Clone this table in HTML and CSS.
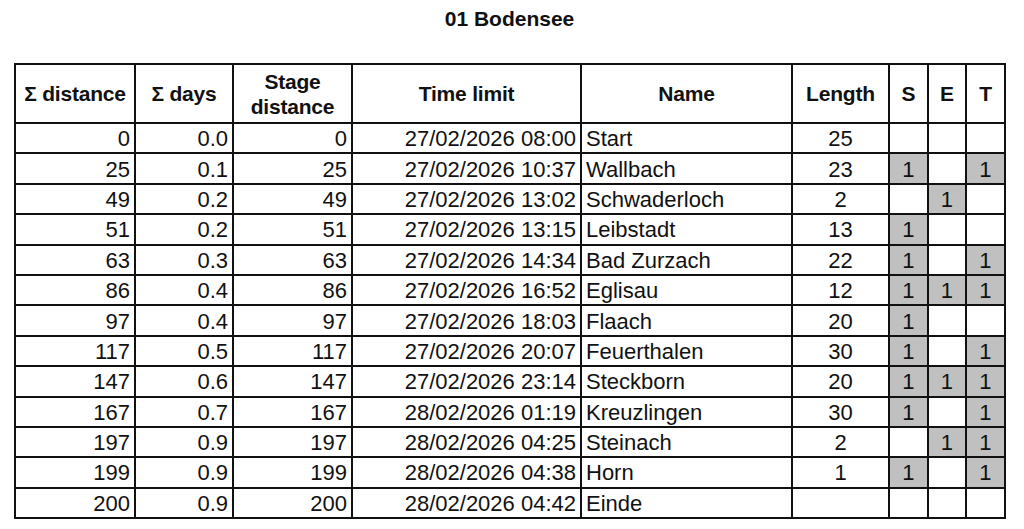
FILE: index.html
```html
<!DOCTYPE html>
<html>
<head>
<meta charset="utf-8">
<link rel="stylesheet" href="styles.css">
</head>
<body>
<div class="sheet">
  <h1 class="title">01 Bodensee</h1>
  <table class="stages">
    <colgroup>
      <col class="c-dist"><col class="c-days"><col class="c-stage"><col class="c-time"><col class="c-name"><col class="c-len"><col class="c-flag"><col class="c-flag"><col class="c-flag">
    </colgroup>
    <thead>
      <tr>
        <th>Σ distance</th><th>Σ days</th><th>Stage<br>distance</th><th>Time limit</th><th>Name</th><th>Length</th><th>S</th><th>E</th><th>T</th>
      </tr>
    </thead>
    <tbody>
      <tr><td class="num">0</td><td class="num">0.0</td><td class="num">0</td><td class="num">27/02/2026 08:00</td><td class="txt">Start</td><td class="ctr">25</td><td></td><td></td><td></td></tr>
      <tr><td class="num">25</td><td class="num">0.1</td><td class="num">25</td><td class="num">27/02/2026 10:37</td><td class="txt">Wallbach</td><td class="ctr">23</td><td class="on">1</td><td></td><td class="on">1</td></tr>
      <tr><td class="num">49</td><td class="num">0.2</td><td class="num">49</td><td class="num">27/02/2026 13:02</td><td class="txt">Schwaderloch</td><td class="ctr">2</td><td></td><td class="on">1</td><td></td></tr>
      <tr><td class="num">51</td><td class="num">0.2</td><td class="num">51</td><td class="num">27/02/2026 13:15</td><td class="txt">Leibstadt</td><td class="ctr">13</td><td class="on">1</td><td></td><td></td></tr>
      <tr><td class="num">63</td><td class="num">0.3</td><td class="num">63</td><td class="num">27/02/2026 14:34</td><td class="txt">Bad Zurzach</td><td class="ctr">22</td><td class="on">1</td><td></td><td class="on">1</td></tr>
      <tr><td class="num">86</td><td class="num">0.4</td><td class="num">86</td><td class="num">27/02/2026 16:52</td><td class="txt">Eglisau</td><td class="ctr">12</td><td class="on">1</td><td class="on">1</td><td class="on">1</td></tr>
      <tr><td class="num">97</td><td class="num">0.4</td><td class="num">97</td><td class="num">27/02/2026 18:03</td><td class="txt">Flaach</td><td class="ctr">20</td><td class="on">1</td><td></td><td></td></tr>
      <tr><td class="num">117</td><td class="num">0.5</td><td class="num">117</td><td class="num">27/02/2026 20:07</td><td class="txt">Feuerthalen</td><td class="ctr">30</td><td class="on">1</td><td></td><td class="on">1</td></tr>
      <tr><td class="num">147</td><td class="num">0.6</td><td class="num">147</td><td class="num">27/02/2026 23:14</td><td class="txt">Steckborn</td><td class="ctr">20</td><td class="on">1</td><td class="on">1</td><td class="on">1</td></tr>
      <tr><td class="num">167</td><td class="num">0.7</td><td class="num">167</td><td class="num">28/02/2026 01:19</td><td class="txt">Kreuzlingen</td><td class="ctr">30</td><td class="on">1</td><td></td><td class="on">1</td></tr>
      <tr><td class="num">197</td><td class="num">0.9</td><td class="num">197</td><td class="num">28/02/2026 04:25</td><td class="txt">Steinach</td><td class="ctr">2</td><td></td><td class="on">1</td><td class="on">1</td></tr>
      <tr><td class="num">199</td><td class="num">0.9</td><td class="num">199</td><td class="num">28/02/2026 04:38</td><td class="txt">Horn</td><td class="ctr">1</td><td class="on">1</td><td></td><td class="on">1</td></tr>
      <tr><td class="num">200</td><td class="num">0.9</td><td class="num">200</td><td class="num">28/02/2026 04:42</td><td class="txt">Einde</td><td class="ctr"></td><td></td><td></td><td></td></tr>
    </tbody>
  </table>
</div>
</body>
</html>
```

FILE: styles.css
```css
html, body {
  margin: 0;
  padding: 0;
  background: #ffffff;
}

.sheet {
  padding: 6px 0 0 14px;
  font-family: "Liberation Sans", Arial, sans-serif;
  color: #111111;
}

.title {
  margin: 0 0 32px 0;
  width: 991px;
  text-align: center;
  font-size: 21px;
  font-weight: bold;
  line-height: 25px;
}

.stages {
  border-collapse: collapse;
  table-layout: fixed;
  width: 991px;
  font-size: 22px;
}

.c-dist { width: 120px; }
.c-days { width: 98px; }
.c-stage { width: 119px; }
.c-time { width: 229px; }
.c-name { width: 211px; }
.c-len { width: 97px; }
.c-flag { width: 38.6px; }

.stages th,
.stages td {
  border: 2px solid #111111;
  padding: 0 4px;
  white-space: nowrap;
  overflow: hidden;
}

.stages th {
  height: 57px;
  font-weight: bold;
  font-size: 21px;
  line-height: 25px;
  text-align: center;
  letter-spacing: -0.2px;
}

.stages tbody tr {
  height: 30.4px;
}

.stages td {
  line-height: 26px;
  padding-top: 2px;
  padding-bottom: 0;
}

.num { text-align: right; }
.txt { text-align: left; padding-left: 3px; }
.ctr { text-align: center; }

.stages td.on {
  background: #c0c0c0;
  text-align: center;
}

.stages td:nth-child(n+7) {
  text-align: center;
}
```
